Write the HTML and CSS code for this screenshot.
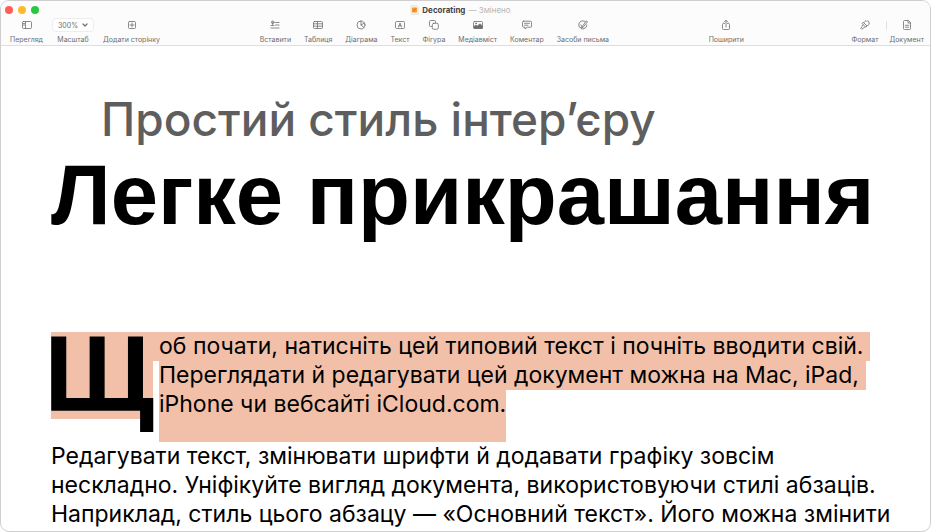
FILE: index.html
```html
<!DOCTYPE html>
<html lang="uk">
<head>
<meta charset="utf-8">
<meta name="viewport" content="width=device-width, initial-scale=1">
<title>Decorating</title>
<link rel="stylesheet" href="styles.css">
</head>
<body>
<div class="window">
  <header class="chrome">
    <div class="titlebar">
      <div class="lights">
        <button class="light close" aria-label="Закрити"></button>
        <button class="light minimize" aria-label="Згорнути"></button>
        <button class="light expand" aria-label="Розгорнути"></button>
      </div>
      <div class="doc-title">
        <svg class="doc-icon" viewBox="0 0 9 10"><path d="M1 .5h5.500l2 2v7H1z" fill="#f1efed" stroke="#dddad7" stroke-width=".5"/><rect x="2" y="2.500" width="5" height="5" rx=".8" fill="#ff9a1f"/><path d="M3 6.500 6 3.500" stroke="#d0622a" stroke-width="1"/></svg>
        <strong>Decorating</strong><span class="edited">— Змінено</span>
      </div>
    </div>
    <nav class="toolbar">
      <div class="group left">
        <button class="tool"><svg viewBox="0 0 12 12"><rect x="1.500" y="2.500" width="9" height="7" rx="1"/><path d="M4.500 2.500v7M2.500 4.500h1M2.500 6h1"/></svg><span>Перегляд</span></button>
        <div class="tool">
          <button class="zoom" id="zoom" aria-label="Масштаб 300%">300%<svg viewBox="0 0 6 6"><path d="m1 2 2 2 2-2"/></svg></button>
          <span>Масштаб</span>
        </div>
        <button class="tool"><svg viewBox="0 0 12 12"><rect x="2.500" y="2.500" width="7" height="7" rx="1"/><path d="M4 6h4M6 4v4"/></svg><span>Додати сторінку</span></button>
      </div>
      <div class="group">
        <button class="tool"><svg viewBox="0 0 12 12"><circle cx="3.700" cy="3.300" r="1.300"/><path d="M3.700 3v3M6.500 3.500h3.500M6.500 6h3.500M2 6.500h3M2 9h8"/></svg><span>Вставити</span></button>
        <button class="tool"><svg viewBox="0 0 12 12"><rect x="1.500" y="2.500" width="9" height="7" rx="1"/><path d="M1.500 4.800h9M1.500 7.200h9M5.500 2.500v7"/></svg><span>Таблиця</span></button>
        <button class="tool"><svg viewBox="0 0 12 12"><circle cx="6" cy="6" r="4"/><path d="M6 2v4l3 2.500M6 6l3.500-2"/></svg><span>Діаграма</span></button>
        <button class="tool"><svg viewBox="0 0 12 12"><rect x="1.500" y="2.500" width="9" height="7" rx="1" stroke-dasharray="2 .6"/><path d="m4.500 8 1.500-4 1.500 4M5 6.800h2"/></svg><span>Текст</span></button>
        <button class="tool"><svg viewBox="0 0 12 12"><path d="M3.500 7.500h-1a1 1 0 0 1-1-1v-4a1 1 0 0 1 1-1h4a1 1 0 0 1 1 1v1"/><rect x="4.300" y="4.300" width="6" height="6" rx="1.500"/></svg><span>Фігура</span></button>
        <button class="tool"><svg viewBox="0 0 12 12"><rect x="1.500" y="2.500" width="9" height="7" rx="1"/><path d="M2 9V7.500L4 6l1.500 1L8 4.800l2.500 2.400V9z" fill="currentColor"/><circle cx="4" cy="4.300" r=".5"/></svg><span>Медіавміст</span></button>
        <button class="tool"><svg viewBox="0 0 12 12"><path d="M2.500 2.200h7a1 1 0 0 1 1 1v4a1 1 0 0 1-1 1H6.200L4 10V8.200H2.500a1 1 0 0 1-1-1v-4a1 1 0 0 1 1-1zM3.500 4.300h5M3.500 6.200h3.500"/></svg><span>Коментар</span></button>
        <button class="tool"><svg viewBox="0 0 12 12"><path d="M8 2.500A4 4 0 1 0 9.800 5.500" stroke-dasharray="2.200 .4"/><path d="M5.200 7.500 9.300 1.800l1.200.9-4.300 5.500-1.400.6zM3.800 5.800l1.200 2"/></svg><span>Засоби письма</span></button>
      </div>
      <div class="group">
        <button class="tool"><svg viewBox="0 0 12 12"><path d="M4.500 4.500h-1a1 1 0 0 0-1 1v4a1 1 0 0 0 1 1h5a1 1 0 0 0 1-1v-4a1 1 0 0 0-1-1h-1M6 8V1.500M4 3.200l2-2 2 2"/></svg><span>Поширити</span></button>
      </div>
      <div class="group right">
        <button class="tool"><svg viewBox="0 0 12 12"><path d="M4.500 3.500 8 7 6.800 8.200 3.300 4.700zM5 3.500 7 1.500l1 1 .8-.8 1.500 1.500-.8.800 1 1L8 7M4 6 1.800 9.300l.9.900L6 8"/></svg><span>Формат</span></button>
        <button class="tool divided"><svg viewBox="0 0 12 12"><path d="M7 1.500H3.500a1 1 0 0 0-1 1v7a1 1 0 0 0 1 1h5a1 1 0 0 0 1-1V4zM7 1.500V4h2.500M4.300 6.300h3.400M4.300 8.200h3.400"/></svg><span>Документ</span></button>
      </div>
    </nav>
  </header>
  <main class="page">
    <p class="subtitle">Простий стиль інтер’єру</p>
    <h1>Легке прикрашання</h1>
    <div class="intro">
      <span class="dropcap">Щ</span>
      <p class="lines">
        <span class="line first">об почати, натисніть цей типовий текст і почніть вводити свій.</span>
        <span class="line">Переглядати й редагувати цей документ можна на Mac, iPad,</span>
        <span class="line last">iPhone чи вебсайті iCloud.com.</span>
      </p>
    </div>
    <p class="body">Редагувати текст, змінювати шрифти й додавати графіку зовсім<br>нескладно. Уніфікуйте вигляд документа, використовуючи стилі абзаців.<br>Наприклад, стиль цього абзацу — «Основний текст». Його можна змінити</p>
  </main>
</div>
</body>
</html>
```
FILE: styles.css
```css
* { box-sizing: border-box; }
body { margin: 0; background: #fff; overflow: hidden; }
p, h1 { margin: 0; }
button { border: 0; padding: 0; background: none; font: inherit; color: inherit; }

.window {
  height: 100vh;
  overflow: hidden;
  border: 1px solid #cfcfcf;
  border-radius: 9px;
  background: #fff;
  font-family: Inter, "Liberation Sans", sans-serif;
}

.chrome {
  height: 45px;
  background: #fcfcfc;
  border-bottom: 1px solid #dedede;
}
.titlebar {
  display: grid;
  grid-template-columns: 1fr auto 1fr;
  align-items: center;
  height: 17px;
  padding: 0 14px 0 4px;
}
.lights { display: flex; gap: 5px; }
.light { width: 8px; height: 8px; border-radius: 50%; }
.close { background: #ff5d55; }
.minimize { background: #ffbb2e; }
.expand { background: #28c840; }
.doc-title { display: flex; align-items: center; gap: 3px; font-size: 8px; color: #444; }
.doc-icon { width: 9px; height: 10px; }
.edited { color: #b5b5b5; }

.toolbar { display: flex; justify-content: space-between; padding: 0 6px 0 9px; }
.group { display: flex; gap: 13px; }
.right { gap: 11px; margin-left: 8px; }
.tool {
  display: flex;
  flex-direction: column;
  align-items: center;
  gap: 3px;
  color: #6e6e6e;
  font-size: 7px;
  line-height: 9px;
  white-space: nowrap;
}
.tool svg {
  width: 12px;
  height: 12px;
  margin: 1px 0;
  fill: none;
  stroke: currentColor;
  stroke-width: .8;
  stroke-linecap: round;
  stroke-linejoin: round;
}
.divided { position: relative; }
.divided::before {
  content: "";
  position: absolute;
  left: -3px;
  top: 3px;
  width: 1px;
  height: 9px;
  background: #e2e2e2;
}
.zoom {
  display: flex;
  align-items: center;
  gap: 4px;
  height: 14px;
  padding: 0 5px;
  margin: 0 -4px;
  border: 1px solid #ededed;
  border-radius: 4px;
  background: #fff;
}
.zoom svg { width: 6px; height: 6px; stroke-width: 1.2; }

.page { padding: 46px 0 0 50px; color: #000; white-space: nowrap; }
.subtitle { padding-left: 50px; font-size: 46px; font-weight: 500; line-height: 54px; color: #5e5e5e; }
h1 { font-family: "Liberation Sans", Arial, sans-serif; font-size: 85px; line-height: 98px; }
.intro { display: flex; margin-top: 88px; font-size: 23px; line-height: 29px; }
.dropcap {
  width: 102px;
  height: 87px;
  background: #f2c0a8;
  font-family: "Liberation Sans", Arial, sans-serif;
  font-size: 108px;
  font-weight: 700;
  line-height: 84px;
  text-indent: -7px;
}
.lines { display: flex; flex-direction: column; align-items: flex-start; }
.line { margin-left: 6px; padding-right: 7px; background: #f2c0a8; }
.first { margin-left: 0; padding-left: 6px; }
.last { padding: 0 0 23px; }
.body { font-size: 23px; line-height: 29px; }
```
